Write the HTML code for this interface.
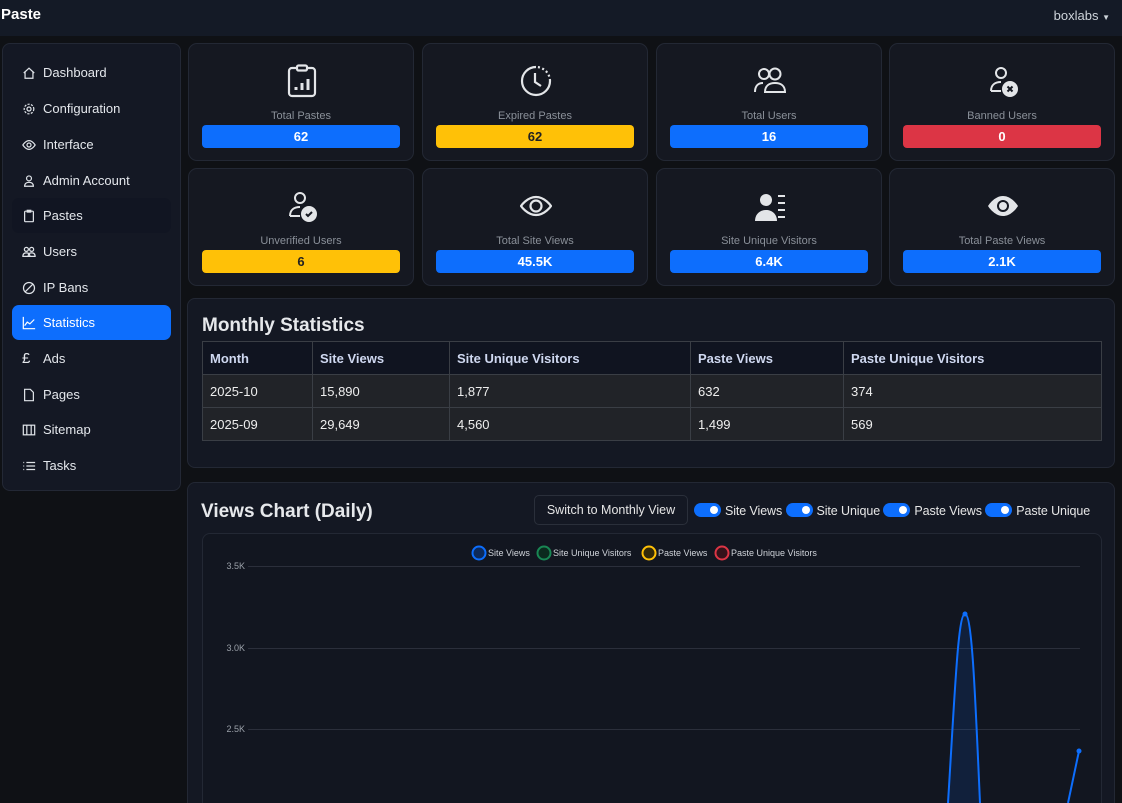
<!DOCTYPE html>
<html><head><meta charset="utf-8"><style>
*{box-sizing:border-box;margin:0;padding:0}
html,body{width:1122px;height:803px;overflow:hidden}
body{background:#0f1115;font-family:"Liberation Sans",sans-serif;color:#dee2e6;position:relative}
.nav{position:absolute;left:0;top:0;width:1122px;height:36px;background:#141a26}
.brand{position:absolute;left:1px;top:6px;font-weight:bold;font-size:15px;color:#fff}
.user{position:absolute;right:12px;top:8px;font-size:13px;color:#ced4da}
.side{position:absolute;left:2px;top:43px;width:179px;height:448px;background:#141824;border:1px solid #232835;border-radius:8px}
.item{position:absolute;left:9px;width:159px;height:35px;border-radius:7px;font-size:13px;color:#e4e7ec;display:flex;align-items:center;padding-left:10px}
.item svg{width:14px;height:14px;margin-right:7px;stroke:#dfe3e8;fill:none;stroke-width:1.4}
.item.act{background:#0d6efd;color:#fff}
.item.hov{background:#111522}
.card{position:absolute;width:226px;height:118px;background:#151821;border:1px solid #232834;border-radius:9px;text-align:center}
.card svg{position:absolute;left:97px;top:20px;width:32px;height:34px}
.card .lbl{position:absolute;top:66px;width:100%;font-size:11px;color:#8a9099}
.card .bar{position:absolute;left:13px;right:13px;top:81px;height:23px;border-radius:4px;font-weight:bold;font-size:13px;line-height:23px;color:#fff}
.b{background:#0d6efd}.y{background:#ffc107;color:#222!important}.r{background:#dc3545}
.panel{position:absolute;left:187px;width:928px;background:#141823;border:1px solid #232834;border-radius:8px}
h2{font-size:19px;font-weight:bold;color:#e6e8eb;position:absolute}
table{position:absolute;left:14px;top:42px;width:900px;border-collapse:collapse;font-size:13px}
th,td{border:1px solid #3a3e45;height:33px;text-align:left;padding-left:7px}
th{background:#101420;color:#cfd8f0;font-weight:bold}
td{background:#212328;color:#eee}
.tg{display:inline-block;width:27px;height:14px;background:#0d6efd;border-radius:7px;position:relative;vertical-align:-2px;margin-right:4px}
.tg:after{content:"";position:absolute;right:3px;top:3px;width:8px;height:8px;border-radius:50%;background:#fff}
</style></head><body>
<div class="nav"><div class="brand">Paste</div><div class="user">boxlabs <span style="font-size:8px">▼</span></div></div>
<div class="side">
<div class="item" style="top:11px"><svg viewBox="0 0 16 16"><path d="M2 8L8 2.5 14 8M3.5 7v7h9V7"/></svg>Dashboard</div>
<div class="item" style="top:47px"><svg viewBox="0 0 16 16"><circle cx="8" cy="8" r="2.3"/><circle cx="8" cy="8" r="5.5" stroke-dasharray="2.5 1.5"/></svg>Configuration</div>
<div class="item" style="top:83px"><svg viewBox="0 0 16 16"><path d="M1 8s3-5 7-5 7 5 7 5-3 5-7 5-7-5-7-5z"/><circle cx="8" cy="8" r="2.3"/></svg>Interface</div>
<div class="item" style="top:119px"><svg viewBox="0 0 16 16"><circle cx="8" cy="5" r="2.8"/><path d="M3 14c0-3 2-4.5 5-4.5s5 1.5 5 4.5z"/></svg>Admin Account</div>
<div class="item hov" style="top:154px"><svg viewBox="0 0 16 16"><rect x="3" y="2.5" width="10" height="12" rx="1"/><rect x="6" y="1.5" width="4" height="2"/></svg>Pastes</div>
<div class="item" style="top:190px"><svg viewBox="0 0 16 16"><circle cx="5" cy="5" r="2.3"/><circle cx="11" cy="5" r="2.3"/><path d="M1 13c0-3 2-4 4-4s4 1 4 4zM7 13c0-3 2-4 4-4s4 1 4 4z"/></svg>Users</div>
<div class="item" style="top:226px"><svg viewBox="0 0 16 16"><circle cx="8" cy="8" r="6.3"/><path d="M3.5 12.5l9-9"/></svg>IP Bans</div>
<div class="item act" style="top:261px"><svg viewBox="0 0 16 16" style="stroke:#fff"><path d="M1.5 1v13.5H15M3 11l3-4 3 2 5-5"/></svg>Statistics</div>
<div class="item" style="top:297px"><span style="width:14px;margin-right:7px;font-size:15px">£</span>Ads</div>
<div class="item" style="top:333px"><svg viewBox="0 0 16 16"><path d="M3 1.5h6.5l3.5 3.5v9.5H3z"/></svg>Pages</div>
<div class="item" style="top:368px"><svg viewBox="0 0 16 16"><rect x="1.5" y="2.5" width="13" height="11"/><path d="M5.5 2.5v11M10.5 2.5v11"/></svg>Sitemap</div>
<div class="item" style="top:404px"><svg viewBox="0 0 16 16"><path d="M5 4h10M5 8h10M5 12h10M1.5 4h1M1.5 8h1M1.5 12h1"/></svg>Tasks</div>
</div>

<div class="card" style="left:188px;top:43px"><svg viewBox="0 0 32 34" fill="none" stroke="#e3e5e8" stroke-width="2.2"><rect x="3" y="4" width="26" height="28" rx="3"/><rect x="11" y="1.5" width="10" height="5" rx="1.5" fill="#151821"/><path d="M10 26v-3M16 26v-7M22 26v-11" stroke-width="3"/></svg><div class="lbl">Total Pastes</div><div class="bar b">62</div></div>
<div class="card" style="left:422px;top:43px"><svg viewBox="0 0 32 34" fill="none" stroke="#e3e5e8" stroke-width="2.2"><path d="M16 3A14 14 0 1 0 30 17" /><path d="M30 17A14 14 0 0 0 16 3" stroke-dasharray="2 2.5"/><path d="M15 9v9l6 4"/></svg><div class="lbl">Expired Pastes</div><div class="bar y">62</div></div>
<div class="card" style="left:656px;top:43px"><svg viewBox="0 0 32 34" fill="none" stroke="#e3e5e8" stroke-width="2"><circle cx="10" cy="10" r="5"/><circle cx="21" cy="10" r="5.5"/><path d="M1 28c0-6 3-9 8-9M11 28c0-6 4-9 10-9s10 3 10 9z"/></svg><div class="lbl">Total Users</div><div class="bar b">16</div></div>
<div class="card" style="left:889px;top:43px"><svg viewBox="0 0 32 34" fill="none" stroke="#e3e5e8" stroke-width="2"><circle cx="14" cy="9" r="5"/><path d="M4 27c0-6 4-9 10-9"/><path d="M4 27h10"/><circle cx="23" cy="25" r="7" fill="#e3e5e8"/><path d="M20.5 22.5l5 5M25.5 22.5l-5 5" stroke="#151821"/></svg><div class="lbl">Banned Users</div><div class="bar r">0</div></div>

<div class="card" style="left:188px;top:168px"><svg viewBox="0 0 32 34" fill="none" stroke="#e3e5e8" stroke-width="2"><circle cx="14" cy="9" r="5"/><path d="M4 27c0-6 4-9 10-9M4 27h10"/><circle cx="23" cy="25" r="7" fill="#e3e5e8"/><path d="M20 25l2 2 4-4" stroke="#151821"/></svg><div class="lbl">Unverified Users</div><div class="bar y">6</div></div>
<div class="card" style="left:422px;top:168px"><svg viewBox="0 0 32 34" fill="none" stroke="#e3e5e8" stroke-width="2.2"><path d="M1 17s6-9 15-9 15 9 15 9-6 9-15 9S1 17 1 17z"/><circle cx="16" cy="17" r="5.5"/></svg><div class="lbl">Total Site Views</div><div class="bar b">45.5K</div></div>
<div class="card" style="left:656px;top:168px"><svg viewBox="0 0 32 34" fill="#e3e5e8"><circle cx="12" cy="11" r="6"/><path d="M1 32c0-7 5-11 11-11s11 4 11 11z"/><rect x="24" y="6" width="7" height="2"/><rect x="24" y="13" width="7" height="2"/><rect x="24" y="20" width="7" height="2"/><rect x="24" y="27" width="7" height="2"/></svg><div class="lbl">Site Unique Visitors</div><div class="bar b">6.4K</div></div>
<div class="card" style="left:889px;top:168px"><svg viewBox="0 0 32 34"><path d="M1 17s6-10 15-10 15 10 15 10-6 10-15 10S1 17 1 17z" fill="#e3e5e8"/><circle cx="16" cy="17" r="6" fill="#151821"/><circle cx="16" cy="17" r="4" fill="#e3e5e8"/></svg><div class="lbl">Total Paste Views</div><div class="bar b">2.1K</div></div>

<div class="panel" style="top:298px;height:170px">
<h2 style="left:14px;top:16px">Monthly Statistics</h2>
<table><tr><th style="width:110px">Month</th><th style="width:137px">Site Views</th><th style="width:241px">Site Unique Visitors</th><th style="width:153px">Paste Views</th><th>Paste Unique Visitors</th></tr>
<tr><td>2025-10</td><td>15,890</td><td>1,877</td><td>632</td><td>374</td></tr>
<tr><td>2025-09</td><td>29,649</td><td>4,560</td><td>1,499</td><td>569</td></tr></table>
</div>

<div class="panel" style="top:482px;height:330px">
<h2 style="left:13px;top:18px">Views Chart (Daily)</h2>
<div style="position:absolute;left:346px;top:12px;width:154px;height:30px;border:1px solid #2a2f3a;border-radius:5px;font-size:12.5px;line-height:28px;text-align:center;color:#e6e6e6">Switch to Monthly View</div>
<div style="position:absolute;left:506px;top:20px;font-size:12.5px;color:#e6e6e6;white-space:nowrap;letter-spacing:-0.1px"><span class="tg"></span>Site Views <span class="tg"></span>Site Unique <span class="tg"></span>Paste Views <span class="tg"></span>Paste Unique</div>
<div style="position:absolute;left:14px;top:50px;width:900px;height:300px;border:1px solid #232834;border-radius:8px;background:#121620"></div>
</div>
<svg style="position:absolute;left:0;top:0" width="1122" height="803" font-family="Liberation Sans,sans-serif">
<g font-size="9" fill="#d0d4da"><circle cx="479" cy="553" r="6.5" fill="#0d2a5a" stroke="#0d6efd" stroke-width="2"/><text x="488" y="556">Site Views</text>
<circle cx="544" cy="553" r="6.5" fill="#0b2a1e" stroke="#198754" stroke-width="2"/><text x="553" y="556">Site Unique Visitors</text>
<circle cx="649" cy="553" r="6.5" fill="#332a0a" stroke="#ffc107" stroke-width="2"/><text x="658" y="556">Paste Views</text>
<circle cx="722" cy="553" r="6.5" fill="#34121a" stroke="#dc3545" stroke-width="2"/><text x="731" y="556">Paste Unique Visitors</text></g>
<g stroke="#2b2f3b" stroke-width="1"><line x1="248" y1="566.5" x2="1080" y2="566.5"/><line x1="248" y1="648.5" x2="1080" y2="648.5"/><line x1="248" y1="729.5" x2="1080" y2="729.5"/></g>
<g font-size="9" fill="#9aa0a8" text-anchor="end"><text x="245" y="569">3.5K</text><text x="245" y="651">3.0K</text><text x="245" y="732">2.5K</text></g>
<path d="M948 803 C955 690 958 614 965 614 C972 614 975 690 980 803Z" fill="#0d6efd" fill-opacity=".12"/>
<path d="M948 803 C955 690 958 614 965 614 C972 614 975 690 980 803" fill="none" stroke="#0d6efd" stroke-width="2"/>
<path d="M1068 803 L1079 751" stroke="#0d6efd" stroke-width="2"/>
<circle cx="965" cy="614" r="2.5" fill="#0d6efd"/><circle cx="1079" cy="751" r="2.5" fill="#0d6efd"/>
</svg>
</body></html>
